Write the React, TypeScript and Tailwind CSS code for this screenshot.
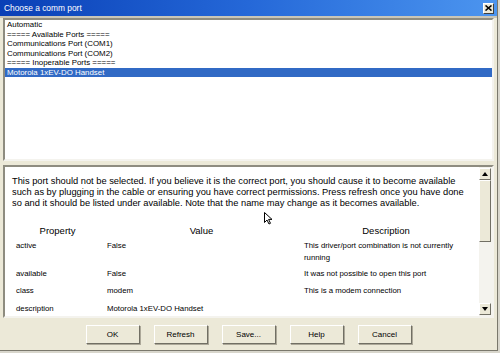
import React from 'react';

const listItems = [
  'Automatic',
  '===== Available Ports =====',
  'Communications Port (COM1)',
  'Communications Port (COM2)',
  '===== Inoperable Ports =====',
  'Motorola 1xEV-DO Handset',
];

const rows = [
  { prop: 'active', value: 'False', desc: 'This driver/port combination is not currently running' },
  { prop: 'available', value: 'False', desc: 'It was not possible to open this port' },
  { prop: 'class', value: 'modem', desc: 'This is a modem connection' },
  { prop: 'description', value: 'Motorola 1xEV-DO Handset', desc: '' },
];

const buttons = ['OK', 'Refresh', 'Save...', 'Help', 'Cancel'];

const Sunken = 'border-2 border-t-[#8e8c80] border-l-[#8e8c80] border-b-[#f4f3ee] border-r-[#f4f3ee]';

const ScrollButton = ({ up }: { up: boolean }) => (
  <div className="h-[12px] w-[12px] bg-[#ece9d8] border border-t-white border-l-white border-b-[#716f64] border-r-[#716f64] flex items-center justify-center">
    <svg width="6" height="4" viewBox="0 0 6 4">
      {up ? <polygon points="3,0 6,4 0,4" fill="#000" /> : <polygon points="0,0 6,0 3,4" fill="#000" />}
    </svg>
  </div>
);

export default function App() {
  return (
    <div className="w-[500px] h-[353px] bg-[#d8d6cc] overflow-hidden font-['Liberation_Sans',Arial,sans-serif]">
      <div className="relative w-[498px] h-[351px] bg-[#ece9d8] border-r border-b border-[#7a786c] flex flex-col">
        {/* title bar */}
        <div className="h-[16px] bg-gradient-to-r from-[#0a3fb6] via-[#2568d8] to-[#4c95ef] flex items-center justify-between pl-[4px] pr-[3px]">
          <span className="text-white text-[8.4px] leading-none">Choose a comm port</span>
          <div className="w-[11px] h-[11px] bg-[#ece9d8] border border-t-white border-l-white border-b-[#404040] border-r-[#404040] flex items-center justify-center">
            <svg width="7" height="6" viewBox="0 0 7 6">
              <path d="M0.5 0.5 L6.5 5.5 M6.5 0.5 L0.5 5.5" stroke="#000" strokeWidth="1.6" />
            </svg>
          </div>
        </div>
        <div className="h-[2px] bg-[#c9c6b8]" />

        {/* port list */}
        <div className={`mx-[3px] h-[143px] bg-white ${Sunken}`}>
          {listItems.map((item, i) => (
            <div
              key={item}
              className={`h-[9.5px] leading-[9.5px] text-[7.9px] px-[2px] whitespace-nowrap ${
                i === listItems.length - 1 ? 'bg-[#316ac5] text-white' : 'text-black'
              }`}
            >
              {item}
            </div>
          ))}
        </div>

        <div className="h-[4px]" />

        {/* details panel */}
        <div className={`mx-[3px] h-[153px] bg-white flex ${Sunken}`}>
          <div className="flex-1 overflow-hidden px-[7px] pt-[9px]">
            <p className="text-[9.3px] leading-[11px] text-black">
              This port should not be selected. If you believe it is the correct port, you should cause it to become available
              such as by plugging in the cable or ensuring you have correct permissions. Press refresh once you have done so
              and it should be listed under available. Note that the name may change as it becomes available.
            </p>
            <div className="mt-[15px] grid grid-cols-[91px_197px_172px] text-black">
              <div className="text-center text-[9.5px] leading-[13px]">Property</div>
              <div className="text-center text-[9.5px] leading-[13px]">Value</div>
              <div className="text-center text-[9.5px] leading-[13px]">Description</div>
              {rows.map((r, i) => {
                const pad = i === 0 ? 'pt-[2.5px] pb-[0.5px]' : 'py-[2.5px]';
                return (
                  <React.Fragment key={r.prop}>
                    <div className={`pl-[4px] ${pad} text-[7.8px] leading-[12.5px]`}>{r.prop}</div>
                    <div className={`pl-[4px] ${pad} text-[7.8px] leading-[12.5px]`}>{r.value}</div>
                    <div className={`pl-[4px] pr-[10px] ${pad} text-[7.8px] leading-[12.5px]`}>{r.desc}</div>
                  </React.Fragment>
                );
              })}
            </div>
          </div>
          <div className="w-[13px] bg-[#f4f3ee] flex flex-col pt-[1px] pb-[1px]">
            <ScrollButton up />
            <div className="h-[62px] w-[12px] bg-[#ece9d8] border border-t-white border-l-white border-b-[#716f64] border-r-[#716f64]" />
            <div className="flex-1" />
            <ScrollButton up={false} />
          </div>
        </div>

        {/* buttons */}
        <div className="flex justify-center gap-[14px] pt-[7px]">
          {buttons.map((b) => (
            <button
              key={b}
              className="w-[54px] h-[19px] bg-[#ece9d8] text-[8px] text-black border border-t-white border-l-white border-b-[#716f64] border-r-[#716f64] shadow-[1px_1px_0_#aca899]"
            >
              {b}
            </button>
          ))}
        </div>

        {/* mouse pointer */}
        <svg className="absolute left-[264px] top-[212px]" width="9" height="13" viewBox="0 0 9 13">
          <path d="M0.5 0.5 L0.5 10.5 L3 8 L5 12 L6.5 11.3 L4.6 7.4 L8 7.4 Z" fill="#fff" stroke="#000" strokeWidth="1" />
        </svg>
      </div>
    </div>
  );
}
